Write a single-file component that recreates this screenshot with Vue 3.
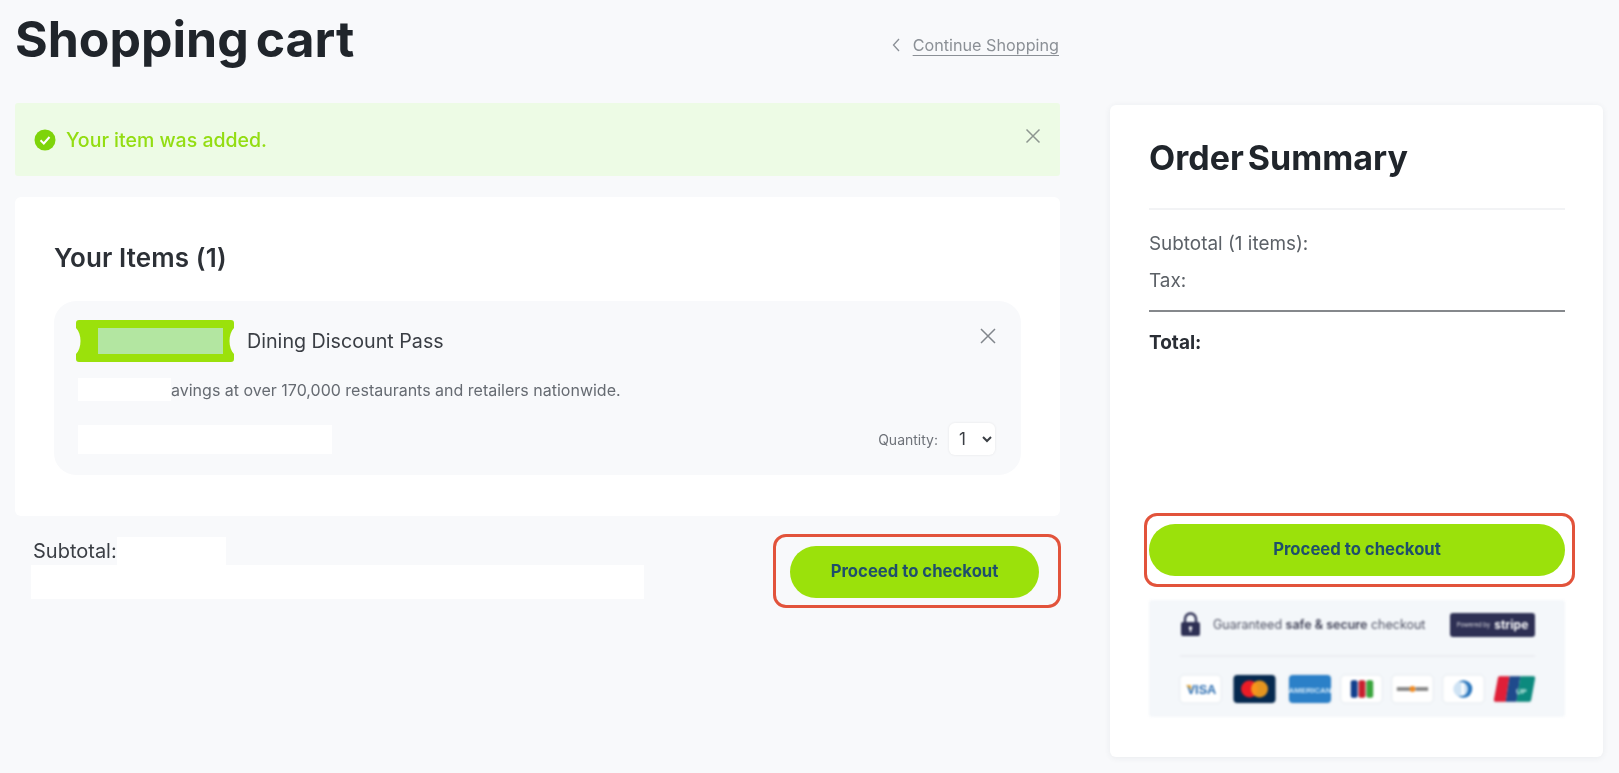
<script setup>
const cards = ['visa','mc','amex','jcb','discover','diners','union']
</script>

<template>
  <div class="page">
    <main class="left">
      <header class="head">
        <h1 class="soft">Shopping cart</h1>
        <a class="back soft">
          <svg width="10" height="16" viewBox="0 0 10 16"><path d="M8 2 2.500 8 8 14" fill="none" stroke="#8a8f96" stroke-width="1.300"/></svg>
          <span>Continue Shopping</span>
        </a>
      </header>

      <div class="notice">
        <div class="notice-msg soft">
          <svg width="22" height="22" viewBox="0 0 22 22"><circle cx="11" cy="11" r="10.500" fill="#7ed40a"/><path d="M6.500 11.300 9.800 14.500 15.500 8" fill="none" stroke="#fff" stroke-width="2"/></svg>
          <span>Your item was added.</span>
        </div>
        <svg class="close soft" width="16" height="16" viewBox="0 0 16 16"><path d="M1.500 1.500 14.500 14.500M14.500 1.500 1.500 14.500" stroke="#8d9690" stroke-width="1.500"/></svg>
      </div>

      <section class="items">
        <h2 class="soft">Your Items (1)</h2>
        <article class="item">
          <div class="item-top">
            <div class="ticket">
              <svg class="ticket-shape" width="158" height="42" viewBox="0 0 158 42"><path d="M3 0H155a3 3 0 0 1 3 3V8C152 14 152 28 158 34V39a3 3 0 0 1-3 3H3a3 3 0 0 1-3-3V34C6 28 6 14 0 8V3a3 3 0 0 1 3-3z" fill="#9be10b"/></svg>
              <span class="ticket-patch"></span>
            </div>
            <span class="item-name soft">Dining Discount Pass</span>
            <svg class="item-x soft" width="18" height="18" viewBox="0 0 18 18"><path d="M2 2 16 16M16 2 2 16" stroke="#81868c" stroke-width="1.500"/></svg>
          </div>
          <div class="desc">
            <span class="patch desc-patch"></span>
            <span class="soft">avings at over 170,000 restaurants and retailers nationwide.</span>
          </div>
          <div class="item-bottom">
            <span class="patch price-patch"></span>
            <div class="qty">
              <span class="soft">Quantity:</span>
              <select class="soft"><option>1</option></select>
            </div>
          </div>
        </article>
      </section>

      <footer class="foot">
        <div class="foot-sub">
          <div class="sub-line">
            <span class="soft">Subtotal:</span>
            <span class="patch sub-patch"></span>
          </div>
          <span class="patch wide-patch"></span>
        </div>
        <div class="cta cta-left">
          <button class="btn"><span class="soft">Proceed to checkout</span></button>
          <span class="frame"></span>
        </div>
      </footer>
    </main>

    <aside class="summary">
      <h2 class="soft">Order Summary</h2>
      <div class="rule"></div>
      <p class="line soft first">Subtotal (1 items):</p>
      <p class="line soft">Tax:</p>
      <div class="rule dark"></div>
      <p class="total soft">Total:</p>

      <div class="cta cta-right">
        <button class="btn"><span class="soft">Proceed to checkout</span></button>
        <span class="frame"></span>
      </div>

      <div class="trust">
        <div class="trust-top">
          <svg class="lock" width="21" height="25" viewBox="0 0 21 25"><path d="M5 11V7a5.500 5.500 0 0 1 11 0v4" fill="none" stroke="#2e3054" stroke-width="2.400"/><rect x="1" y="10" width="19" height="14" rx="2" fill="#2e3054"/><circle cx="10.500" cy="16" r="1.800" fill="#fff"/><rect x="9.800" y="16" width="1.400" height="4" fill="#fff"/></svg>
          <span class="trust-text">Guaranteed <b>safe &amp; secure</b> checkout</span>
          <span class="stripe"><small>Powered by</small><b>stripe</b></span>
        </div>
        <div class="cards">
          <svg v-for="c in cards" :key="c" class="pay" :class="'pay-' + c" viewBox="0 0 42 28">
            <template v-if="c === 'visa'">
              <rect x=".5" y=".5" width="41" height="27" rx="4" fill="#fff"/>
              <text x="22" y="19" text-anchor="middle" font-size="13" font-weight="800" fill="#2a6cb0" font-family="Liberation Sans, sans-serif">VISA</text>
              <path d="M6 10h5l1 5z" fill="#e8a93a"/>
            </template>
            <template v-else-if="c === 'mc'">
              <rect width="42" height="28" rx="4" fill="#05294f"/>
              <circle cx="16" cy="14" r="8.500" fill="#eb1c26"/>
              <circle cx="26" cy="14" r="8.500" fill="#f79e1b" opacity=".92"/>
            </template>
            <template v-else-if="c === 'amex'">
              <rect width="42" height="28" rx="4" fill="#2b80c8"/>
              <text x="21" y="17.500" text-anchor="middle" font-size="8" font-weight="700" fill="#cfe6f7" font-family="Liberation Sans, sans-serif">AMERICAN</text>
            </template>
            <template v-else-if="c === 'jcb'">
              <rect x=".5" y=".5" width="41" height="27" rx="4" fill="#fff"/>
              <rect x="10" y="5" width="7" height="18" rx="2" fill="#123f8c"/>
              <rect x="18" y="5" width="7" height="18" rx="2" fill="#c8202f"/>
              <rect x="26" y="5" width="7" height="18" rx="2" fill="#3aa53d"/>
            </template>
            <template v-else-if="c === 'discover'">
              <rect x=".5" y=".5" width="41" height="27" rx="4" fill="#fff"/>
              <rect x="5" y="12" width="14" height="4" fill="#8a8a8a"/>
              <circle cx="21" cy="14" r="3" fill="#ef8a23"/>
              <rect x="24" y="12" width="13" height="4" fill="#8a8a8a"/>
            </template>
            <template v-else-if="c === 'diners'">
              <rect x=".5" y=".5" width="41" height="27" rx="4" fill="#fff"/>
              <circle cx="21" cy="14" r="9" fill="#2b77bd"/>
              <circle cx="18" cy="14" r="7.500" fill="#cfe3f4"/>
              <rect x="19" y="8" width="2.500" height="12" fill="#fff"/>
            </template>
            <template v-else>
              <path d="M6 1h10L12 27H2a2 2 0 0 1-2-2.400L4 3a2 2 0 0 1 2-2z" fill="#e01f38"/>
              <path d="M16 1h11l-4 26H12z" fill="#1f4a8c"/>
              <path d="M27 1h13a2 2 0 0 1 2 2.400L38 25a2 2 0 0 1-2 2H23z" fill="#0c8a7e"/>
              <text x="28" y="19" text-anchor="middle" font-size="8" font-weight="700" fill="#c7ece5" font-family="Liberation Sans, sans-serif">UP</text>
            </template>
          </svg>
        </div>
      </div>
    </aside>
  </div>
</template>

<style>
html, body { margin: 0; background: #f8f9fb; }
</style>

<style scoped>
.page {
  display: flex;
  align-items: flex-start;
  height: 773px;
  width: 1619px;
  overflow: hidden;
  padding-left: 15px;
  box-sizing: border-box;
  background: #f8f9fb;
  color: #23272e;
  font-family: Inter, "Liberation Sans", sans-serif;
}
.soft { filter: blur(.6px); }
h1, h2, p { margin: 0; }
.left { width: 1045px; flex: none; }
.head {
  height: 103px;
  display: flex;
  justify-content: space-between;
  align-items: flex-start;
}
h1 {
  font-size: 50px;
  line-height: 60px;
  margin-top: 9px;
  font-weight: 700;
  letter-spacing: 0;
  word-spacing: -5px;
  color: #20252b;
}
.back {
  display: flex;
  align-items: center;
  gap: 12px;
  margin: 35px 1px 0 0;
  font-size: 16.200px;
  color: #8b9096;
}
.back span { text-decoration: underline; text-underline-offset: 4px; }
.notice {
  height: 73px;
  background: #edfbe5;
  border-radius: 3px;
  display: flex;
  justify-content: space-between;
  padding: 0 19px 0 19px;
}
.notice-msg {
  display: flex;
  align-items: center;
  gap: 10px;
  font-size: 19.500px;
  font-weight: 500;
  color: #93dd12;
  margin-top: 1px;
}
.close { margin-top: 25px; }
.items {
  margin-top: 21px;
  height: 319px;
  background: #fff;
  border-radius: 6px;
  padding: 0 39px;
  box-sizing: border-box;
  overflow: hidden;
}
.items h2 {
  font-size: 26px;
  line-height: 32px;
  font-weight: 600;
  margin-top: 45px;
  letter-spacing: .1px;
  color: #2c3036;
}
.item {
  margin-top: 27px;
  height: 174px;
  background: #f8f9fb;
  border-radius: 22px;
  padding: 19px 26px 0 22px;
  box-sizing: border-box;
}
.item-top {
  display: flex;
  align-items: center;
  height: 42px;
}
.ticket {
  position: relative;
  width: 158px;
  height: 42px;
  flex: none;
  display: flex;
  align-items: center;
  padding-left: 22px;
  box-sizing: border-box;
}
.ticket-shape { position: absolute; left: 0; top: 0; }
.ticket-patch { position: relative; display: block; width: 125px; height: 26px; background: #b3e6a1; }
.item-name {
  font-size: 19.700px;
  margin-left: 13px;
  color: #3a3e44;
}
.item-x { margin: -10px -2px 0 auto; }
.desc {
  display: flex;
  align-items: center;
  height: 23px;
  margin: 16px 0 0 2px;
  font-size: 16px;
  color: #666b72;
}
.patch { display: block; background: #fff; flex: none; }
.desc-patch { width: 93px; height: 23px; }
.item-bottom {
  display: flex;
  justify-content: space-between;
  align-items: center;
  margin: 22px 0 0 2px;
  height: 32px;
}
.price-patch { width: 254px; height: 29px; }
.qty {
  display: flex;
  align-items: center;
  gap: 11px;
  font-size: 14px;
  color: #6e7279;
}
.qty select {
  width: 46px;
  height: 32px;
  border: 0;
  border-radius: 6px;
  background: #fff;
  box-shadow: 0 0 3px rgba(0,0,0,.08);
  padding-left: 6px;
  font-family: inherit;
  font-size: 17px;
  color: #3a3e44;
}
.foot {
  display: flex;
  justify-content: space-between;
  align-items: flex-start;
  padding: 30px 21px 0 16px;
}
.foot-sub { margin-top: -9px; }
.sub-line {
  display: flex;
  align-items: center;
  height: 28px;
  margin-left: 2px;
  font-size: 20px;
  color: #3a3e44;
}
.sub-patch { width: 109px; height: 28px; margin-left: 0; }
.wide-patch { width: 613px; height: 34px; }
.cta { position: relative; }
.cta-left { width: 249px; }
.btn {
  display: block;
  width: 100%;
  height: 52px;
  border: 0;
  border-radius: 27px;
  background: #9be10b;
  color: #1f4f6b;
  font-family: inherit;
  font-size: 16.700px;
  font-weight: 700;
  padding: 0 0 2px;
}
.frame {
  position: absolute;
  inset: -12px -22px -10px -17px;
  border: 3px solid #e2533b;
  border-radius: 13px;
  pointer-events: none;
}
.summary {
  flex: none;
  width: 493px;
  height: 652px;
  margin: 105px 0 0 50px;
  background: #fff;
  border-radius: 6px;
  box-shadow: 0 1px 6px rgba(40,50,70,.07);
  padding: 0 38px 0 39px;
  box-sizing: border-box;
  display: flex;
  flex-direction: column;
}
.summary h2 {
  font-size: 34px;
  line-height: 42px;
  margin-top: 32px;
  font-weight: 700;
  letter-spacing: 0;
  word-spacing: -4px;
  color: #20252b;
}
.rule { height: 2px; background: #f2f3f5; margin-top: 29px; flex: none; }
.rule.dark { background: #85888c; margin-top: 17px; }
.line { font-size: 18.900px; line-height: 24px; color: #5c6167; margin-top: 13px; }
.line.first { margin-top: 22px; }
.total { font-size: 19px; line-height: 24px; font-weight: 700; margin-top: 19px; color: #2a2e35; }
.cta-right { margin-top: 169px; }
.cta-right .frame { inset: -11px -10px -11px -5px; }
.trust {
  margin-top: 24px;
  height: 117px;
  background: #f4f7fa;
  border-radius: 3px;
  padding: 12px 30px 0 31px;
  box-sizing: border-box;
  filter: blur(.8px);
}
.trust-top {
  display: flex;
  align-items: center;
  height: 25px;
  padding-bottom: 18px;
  border-bottom: 2px solid #ecedf2;
}
.lock { flex: none; }
.trust-text {
  margin-left: 12px;
  font-size: 12.500px;
  color: #4e5163;
  white-space: nowrap;
}
.trust-text b { font-weight: 600; color: #3f4156; }
.stripe {
  margin-left: auto;
  width: 85px;
  height: 24px;
  background: #2e3054;
  border-radius: 3px;
  color: #fff;
  display: flex;
  align-items: center;
  justify-content: center;
  gap: 4px;
  font-size: 12px;
}
.stripe small { font-size: 6px; opacity: .8; }
.cards {
  display: flex;
  justify-content: space-between;
  margin-top: 18px;
}
.pay { height: 28px; width: 41px; filter: drop-shadow(0 0 1.500px rgba(60,70,90,.12)); }
.pay-mc { width: 47px; }
.pay-amex { width: 44px; }
</style>
